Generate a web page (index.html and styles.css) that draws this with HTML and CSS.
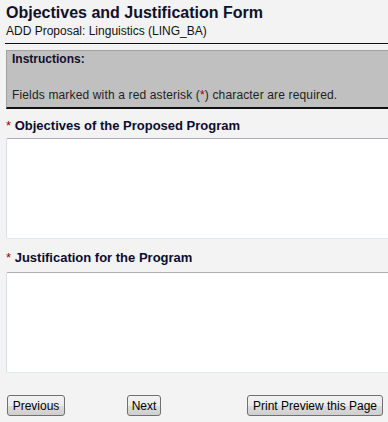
FILE: index.html
```html
<!DOCTYPE html>
<html>
<head>
<meta charset="utf-8">
<title>Objectives and Justification Form</title>
<link rel="stylesheet" href="styles.css">
</head>
<body>
<div class="page">
  <div class="header">
    <h1 class="title">Objectives and Justification Form</h1>
    <div class="subtitle">ADD Proposal: Linguistics (LING_BA)</div>
  </div>
  <div class="instructions">
    <div class="instr-title">Instructions:</div>
    <p class="instr-text">Fields marked with a red asterisk (<span class="req">*</span>) character are required.</p>
  </div>
  <div class="field">
    <label class="field-label"><span class="req">*</span> Objectives of the Proposed Program</label>
    <textarea class="field-input"></textarea>
  </div>
  <div class="field field-second">
    <label class="field-label"><span class="req">*</span> Justification for the Program</label>
    <textarea class="field-input"></textarea>
  </div>
  <div class="actions">
    <button class="btn btn-prev">Previous</button>
    <button class="btn btn-next">Next</button>
    <button class="btn btn-print">Print Preview this Page</button>
  </div>
</div>
</body>
</html>
```

FILE: styles.css
```css
html, body {
  margin: 0;
  padding: 0;
  background: #f3f3f3;
  overflow: hidden;
}

body {
  font-family: "Liberation Sans", Arial, sans-serif;
  font-size: 12px;
  color: #1a1a1a;
}

.page {
  width: 420px;
  padding: 3px 0 0 6px;
}

.header {
  padding-bottom: 4px;
  border-bottom: 1px solid #111;
  margin-left: -1px;
  padding-left: 1px;
}

.title {
  margin: 0;
  font-size: 16px;
  line-height: 20px;
  font-weight: bold;
  color: #10102a;
}

.subtitle {
  margin-top: 0;
  font-size: 12px;
  line-height: 16px;
  color: #111;
}

.instructions {
  margin-top: 6px;
  background: #c0c0c0;
  border-top: 1px solid #a0a0a0;
  border-left: 1px solid #a0a0a0;
  border-bottom: 2px solid #111;
  padding: 1px 5px 5px 5px;
  color: #222;
}

.instr-title {
  font-weight: bold;
  line-height: 14px;
  color: #10102a;
}

.instr-text {
  margin: 22px 0 0 0;
  line-height: 14px;
  letter-spacing: 0.15px;
}

.req {
  color: #a00000;
  font-weight: normal;
}

.field {
  margin-top: 9px;
}

.field-second {
  margin-top: 11px;
}

.field-label {
  display: block;
  font-size: 13px;
  line-height: 15px;
  font-weight: bold;
  color: #0c0c30;
}

.field-input {
  display: block;
  box-sizing: border-box;
  width: 400px;
  height: 101px;
  margin: 5px 0 0 0;
  padding: 2px;
  background: #fff;
  border: 1px solid #dbdfe6;
  border-top-color: #abadb3;
  border-bottom-color: #e3e9ef;
  border-radius: 2px;
  resize: none;
  font-family: "Liberation Sans", Arial, sans-serif;
  font-size: 12px;
}

.field-second .field-input {
  margin-top: 7px;
}

.actions {
  display: flex;
  align-items: center;
  margin-top: 22px;
  padding-left: 1px;
  width: 376px;
}

.btn {
  box-sizing: border-box;
  height: 21px;
  padding: 0;
  border: 1px solid #707070;
  border-radius: 3px;
  background: linear-gradient(#f2f2f2 0%, #ebebeb 50%, #dddddd 51%, #cfcfcf 100%);
  font-family: "Liberation Sans", Arial, sans-serif;
  font-size: 12px;
  color: #000;
  text-align: center;
}

.btn-prev {
  width: 58px;
}

.btn-next {
  width: 34px;
  margin-left: 62px;
}

.btn-print {
  width: 136px;
  margin-left: auto;
}
```
